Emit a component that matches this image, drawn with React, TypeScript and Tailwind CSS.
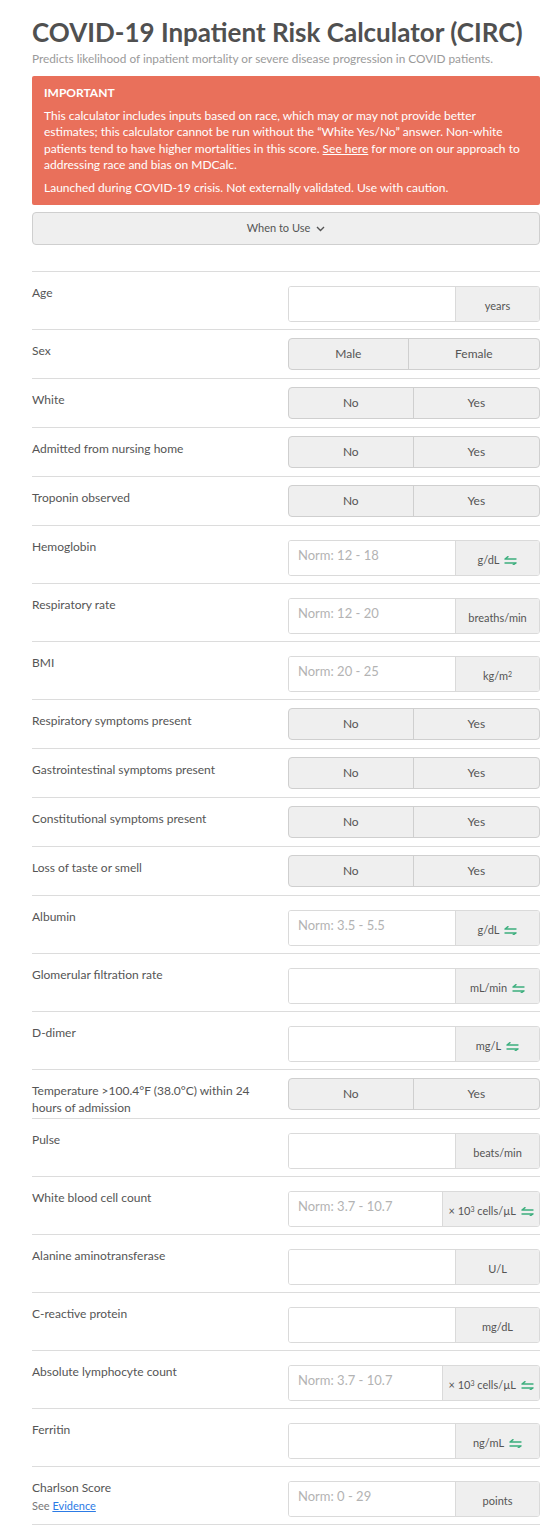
import React from "react";

const font = { fontFamily: "Lato, 'Open Sans', Arial, sans-serif" };

function Swap() {
  return (
    <svg width="13" height="9" viewBox="0 0 13 9" className="ml-[5px] inline-block" fill="none" stroke="#3daf7e" strokeWidth="1.4" strokeLinecap="round">
      <path d="M1 3h11M1 3l3-2.4" />
      <path d="M1 7h11M12 7l-3 2" />
    </svg>
  );
}

function Label({ children }: { children: React.ReactNode }) {
  return <div className="flex-1 pt-[12px] pr-3 text-[12px] leading-[17px] text-[#555]">{children}</div>;
}

function InputRow({ label, unit, placeholder, swap }: { label: React.ReactNode; unit: React.ReactNode; placeholder?: string; swap?: boolean }) {
  return (
    <div className="flex border-t border-[#dcdcdc]">
      <Label>{label}</Label>
      <div className="w-[252px] pt-[14px] pb-[7px]">
        <div className="flex h-[36px] overflow-hidden rounded-[3px] border border-[#dadada]">
          <div className="flex flex-1 items-center bg-white pb-[5px] pl-[9px] text-[13px] text-[#b3b3b3]">{placeholder}</div>
          <div className="flex min-w-[84px] items-center justify-center border-l border-[#dadada] bg-[#efefef] px-[5px] pt-[5px] text-[11px] text-[#555]">
            {unit}
            {swap && <Swap />}
          </div>
        </div>
      </div>
    </div>
  );
}

function ToggleRow({ label, a = "No", b = "Yes" }: { label: React.ReactNode; a?: string; b?: string }) {
  return (
    <div className="flex border-t border-[#dcdcdc]">
      <Label>{label}</Label>
      <div className="w-[252px] py-[8px]">
        <div className="flex h-[32px] overflow-hidden rounded-[4px] border border-[#cfcfcf] bg-[#efefef] text-[12px] text-[#555]">
          <div className="flex flex-auto items-center justify-center px-2">{a}</div>
          <div className="flex flex-auto items-center justify-center border-l border-[#cfcfcf] px-2">{b}</div>
        </div>
      </div>
    </div>
  );
}

const cells = (
  <span>
    × 10<sup className="text-[7px]">3</sup> cells/µL
  </span>
);

export default function App() {
  return (
    <div className="min-h-[1538px] bg-white pt-[17px] pr-[12px] pb-[13px] pl-[32px]" style={font}>
      <h1 className="text-[26px] leading-[30px] font-bold text-[#505050]">COVID-19 Inpatient Risk Calculator (CIRC)</h1>
      <p className="mt-[5px] text-[11.8px] leading-[14px] text-[#9a9a9a]">
        Predicts likelihood of inpatient mortality or severe disease progression in COVID patients.
      </p>

      <div className="mt-[10px] rounded-[2px] bg-[#e9705b] px-[12px] pt-[9px] pb-[9px] text-[12px] leading-[16.5px] text-white">
        <div className="font-bold">IMPORTANT</div>
        <p className="mt-[6px] whitespace-nowrap">
          This calculator includes inputs based on race, which may or may not provide better
          <br />
          estimates; this calculator cannot be run without the “White Yes/No” answer. Non-white
          <br />
          patients tend to have higher mortalities in this score. <span className="underline">See here</span> for more on our approach to
          <br />
          addressing race and bias on MDCalc.
        </p>
        <p className="mt-[6px]">Launched during COVID-19 crisis. Not externally validated. Use with caution.</p>
      </div>

      <div className="mt-[7px] flex h-[33px] items-center justify-center rounded-[4px] border border-[#cfcfcf] bg-[#efefef] text-[11px] text-[#555]">
        When to Use
        <svg width="9" height="6" viewBox="0 0 9 6" className="ml-[6px]" fill="none" stroke="#555" strokeWidth="1.4">
          <path d="M1 1l3.5 3.5L8 1" />
        </svg>
      </div>

      <div className="mt-[26px] border-b border-[#dcdcdc]">
        <InputRow label="Age" unit="years" />
        <ToggleRow label="Sex" a="Male" b="Female" />
        <ToggleRow label="White" />
        <ToggleRow label="Admitted from nursing home" />
        <ToggleRow label="Troponin observed" />
        <InputRow label="Hemoglobin" placeholder="Norm: 12 - 18" unit="g/dL" swap />
        <InputRow label="Respiratory rate" placeholder="Norm: 12 - 20" unit="breaths/min" />
        <InputRow
          label="BMI"
          placeholder="Norm: 20 - 25"
          unit={
            <span>
              kg/m<sup className="text-[7px]">2</sup>
            </span>
          }
        />
        <ToggleRow label="Respiratory symptoms present" />
        <ToggleRow label="Gastrointestinal symptoms present" />
        <ToggleRow label="Constitutional symptoms present" />
        <ToggleRow label="Loss of taste or smell" />
        <InputRow label="Albumin" placeholder="Norm: 3.5 - 5.5" unit="g/dL" swap />
        <InputRow label="Glomerular filtration rate" unit="mL/min" swap />
        <InputRow label="D-dimer" unit="mg/L" swap />
        <ToggleRow
          label={
            <>
              Temperature &gt;100.4°F (38.0°C) within 24
              <br />
              hours of admission
            </>
          }
        />
        <InputRow label="Pulse" unit="beats/min" />
        <InputRow label="White blood cell count" placeholder="Norm: 3.7 - 10.7" unit={cells} swap />
        <InputRow label="Alanine aminotransferase" unit="U/L" />
        <InputRow label="C-reactive protein" unit="mg/dL" />
        <InputRow label="Absolute lymphocyte count" placeholder="Norm: 3.7 - 10.7" unit={cells} swap />
        <InputRow label="Ferritin" unit="ng/mL" swap />
        <InputRow
          label={
            <>
              Charlson Score
              <div className="mt-[1px] text-[11px] text-[#777]">
                See <span className="text-[#2c7be5] underline">Evidence</span>
              </div>
            </>
          }
          placeholder="Norm: 0 - 29"
          unit="points"
        />
      </div>
    </div>
  );
}
